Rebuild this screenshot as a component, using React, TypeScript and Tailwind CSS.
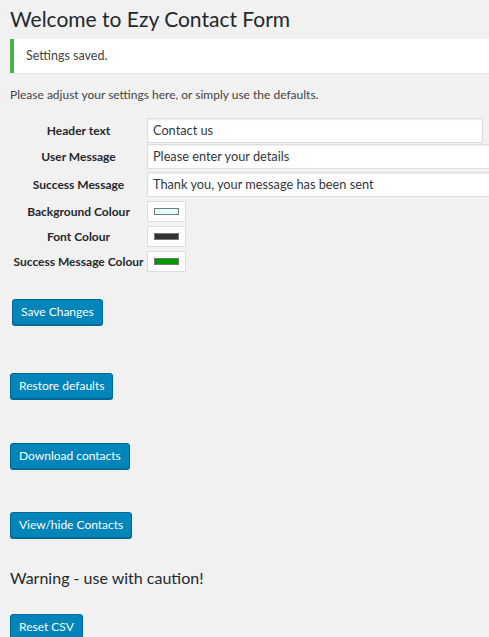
import React from "react";

const font = { fontFamily: 'Lato, "Noto Sans", Arial, sans-serif' };

type TextRow = { label: string; value: string; wide: boolean };
type ColourRow = { label: string; swatch: string };

const textRows: TextRow[] = [
  { label: "Header text", value: "Contact us", wide: false },
  { label: "User Message", value: "Please enter your details", wide: true },
  { label: "Success Message", value: "Thank you, your message has been sent", wide: true },
];

const colourRows: ColourRow[] = [
  { label: "Background Colour", swatch: "bg-[#e0ffff]" },
  { label: "Font Colour", swatch: "bg-[#333333]" },
  { label: "Success Message Colour", swatch: "bg-[#009900]" },
];

const Button = ({ children, className = "" }: { children: React.ReactNode; className?: string }) => (
  <button
    className={`h-[26px] rounded-[3px] border border-[#006799] bg-[#0085ba] px-[8px] text-[12px] leading-[24px] text-white shadow-[0_1px_0_#006799] ${className}`}
  >
    {children}
  </button>
);

export default function App() {
  return (
    <div className="min-h-[637px] w-[489px] overflow-hidden bg-[#f1f1f1] text-[#23282d]" style={font}>
      {/* Title */}
      <h1 className="pl-[10px] pt-[3px] text-[21px] leading-[31px] font-normal">
        Welcome to Ezy Contact Form
      </h1>

      {/* Notice */}
      <div className="ml-[10px] mt-[5px] flex h-[34px] w-[500px] items-center border-l-4 border-[#46b450] bg-white pl-[12px] text-[12.5px] text-[#444] shadow-[0_1px_1px_rgba(0,0,0,0.04)]">
        Settings saved.
      </div>

      <p className="mt-[13px] pl-[10px] text-[12px] leading-[18px] text-[#444]">
        Please adjust your settings here, or simply use the defaults.
      </p>

      {/* Form table */}
      <div className="mt-[14px] flex flex-col">
        {textRows.map((row, i) => (
          <div key={row.label} className={`flex items-center ${i === 0 ? "" : i === 1 ? "mt-px" : "mt-[3px]"}`}>
            <div className="w-[147px] shrink-0 whitespace-nowrap pl-[10px] text-center text-[12px] font-bold text-[#23282d]">
              {row.label}
            </div>
            <div
              className={`flex h-[25px] shrink-0 items-center border border-[#ddd] bg-white pl-[5px] text-[12.75px] text-[#32373c] shadow-[inset_0_1px_2px_rgba(0,0,0,0.07)] ${
                row.wide ? "w-[360px]" : "w-[336px]"
              }`}
            >
              {row.value}
            </div>
          </div>
        ))}
        <div className="mt-[4px] flex flex-col gap-[4px]">
          {colourRows.map((row) => (
            <div key={row.label} className="flex items-center">
              <div className="w-[147px] shrink-0 whitespace-nowrap pl-[10px] text-center text-[12px] font-bold text-[#23282d]">
                {row.label}
              </div>
              <div className="flex h-[21px] w-[39px] items-center justify-center border border-[#ddd] bg-white">
                <div className={`h-[7px] w-[25px] border border-[#777] ${row.swatch}`} />
              </div>
            </div>
          ))}
        </div>
      </div>

      {/* Actions */}
      <div className="flex flex-col items-start">
        <Button className="ml-[12px] mt-[27px]">Save Changes</Button>
        <Button className="ml-[10px] mt-[48px]">Restore defaults</Button>
        <Button className="ml-[10px] mt-[44px]">Download contacts</Button>
        <Button className="ml-[10px] mt-[43px]">View/hide Contacts</Button>
        <p className="ml-[10px] mt-[29px] text-[16px] leading-[22px]">Warning - use with caution!</p>
        <Button className="ml-[10px] mt-[25px]">Reset CSV</Button>
      </div>
    </div>
  );
}
